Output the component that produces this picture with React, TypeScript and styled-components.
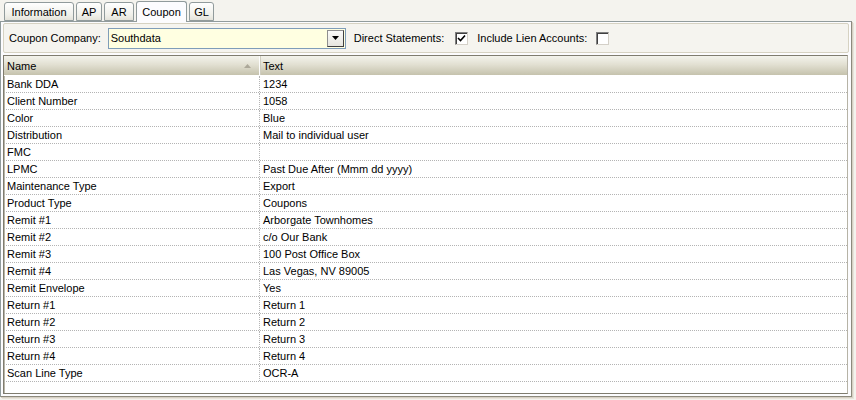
import * as React from "react";
import styled, { createGlobalStyle } from "styled-components";

const rows: [string, string][] = [
    ["Bank DDA", "1234"],
    ["Client Number", "1058"],
    ["Color", "Blue"],
    ["Distribution", "Mail to individual user"],
    ["FMC", ""],
    ["LPMC", "Past Due After (Mmm dd yyyy)"],
    ["Maintenance Type", "Export"],
    ["Product Type", "Coupons"],
    ["Remit #1", "Arborgate Townhomes"],
    ["Remit #2", "c/o Our Bank"],
    ["Remit #3", "100 Post Office Box"],
    ["Remit #4", "Las Vegas, NV 89005"],
    ["Remit Envelope", "Yes"],
    ["Return #1", "Return 1"],
    ["Return #2", "Return 2"],
    ["Return #3", "Return 3"],
    ["Return #4", "Return 4"],
    ["Scan Line Type", "OCR-A"],
];

const tabs: [string, number][] = [
    ["Information", 70],
    ["AP", 26],
    ["AR", 30],
    ["Coupon", 51],
    ["GL", 25],
];

const GlobalStyle = createGlobalStyle`
    html, body {
        margin: 0;
        padding: 0;
        background: #f4f3ee;
    }
    body {
        font-family: "Liberation Sans", Arial, sans-serif;
        font-size: 11px;
        color: #000;
    }
`;

const Window = styled("div")`
    width: 856px;
    height: 400px;
    box-sizing: border-box;
    display: flex;
    flex-direction: column;
    background: #f4f3ee;
    overflow: hidden;
`;

const TabStrip = styled("div")`
    display: flex;
    align-items: flex-end;
    gap: 2px;
    height: 21px;
    padding-left: 4px;
    position: relative;
    z-index: 1;
`;

const Tab = styled("div")<{ $active?: boolean; $width: number }>`
    box-sizing: border-box;
    width: ${(p) => p.$width}px;
    height: ${(p) => (p.$active ? "21px" : "19px")};
    margin-bottom: ${(p) => (p.$active ? "-1px" : "0")};
    display: flex;
    align-items: center;
    justify-content: center;
    border: 1px solid #919b9c;
    border-bottom: ${(p) => (p.$active ? "none" : "1px solid #919b9c")};
    border-radius: 3px 3px 0 0;
    background: ${(p) =>
        p.$active
            ? "#fcfcfe"
            : "linear-gradient(#ffffff, #f0f0ea 70%, #e4e3da)"};
    color: #000;
    white-space: nowrap;
`;

const Panel = styled("div")`
    flex: 1;
    margin: 0 4px 3px 0;
    box-sizing: border-box;
    border: 1px solid #919b9c;
    border-right-color: #8d8a7d;
    border-bottom-color: #8d8a7d;
    box-shadow: 1px 1px 0 #d6d0c4, 2px 2px 0 #e7e3da;
    background: #fcfcfe;
    padding: 1px 2px 2px 2px;
    display: flex;
    flex-direction: column;
    gap: 2px;
`;

const Toolbar = styled("div")`
    height: 30px;
    box-sizing: border-box;
    display: flex;
    align-items: center;
    padding: 0 5px;
    border: 1px solid #d6d2c2;
    border-radius: 2px;
    background: #f5f4ef;
`;

const Label = styled("span")<{ $gap?: number }>`
    margin-right: ${(p) => p.$gap ?? 10}px;
    white-space: nowrap;
`;

const Combo = styled("div")`
    width: 238px;
    height: 21px;
    box-sizing: border-box;
    display: flex;
    border: 1px solid #7f9db9;
    background: #ffffe1;
    margin-right: 8px;
`;

const ComboText = styled("div")`
    flex: 1;
    display: flex;
    align-items: center;
    padding-left: 2px;
`;

const ComboButton = styled("div")`
    width: 17px;
    margin: 1px;
    box-sizing: border-box;
    display: flex;
    align-items: center;
    justify-content: center;
    border: 1px solid #8f8f8f;
    border-right-color: #404040;
    border-bottom-color: #404040;
    background: linear-gradient(#fbfbf9, #e6e5df);
`;

const Check = styled("div")`
    width: 13px;
    height: 13px;
    box-sizing: border-box;
    border: 1px solid;
    border-color: #808080 #d4d0c8 #d4d0c8 #808080;
    box-shadow: inset 1px 1px 0 #404040;
    background: #fff;
    display: flex;
    align-items: center;
    justify-content: center;
    margin-right: 9px;
`;

const Grid = styled("div")`
    flex: 1;
    box-sizing: border-box;
    border: 1px solid #7f7c6f;
    border-right-color: #b6b3a6;
    box-shadow: inset 1px 1px 0 #b9b6a8;
    margin-right: 1px;
    background: #fff;
    display: flex;
    flex-direction: column;
    overflow: hidden;
`;

const HeaderRow = styled("div")`
    display: grid;
    grid-template-columns: 256px 1fr;
    height: 19px;
    background: linear-gradient(#f3f3ec, #e2e0d2 45%, #c5c2ad);
    border-bottom: 1px solid #ffffff;
`;

const HeaderCell = styled("div")<{ $divider?: boolean }>`
    display: flex;
    align-items: center;
    justify-content: space-between;
    padding: 0 8px 0 3px;
    border-right: ${(p) => (p.$divider ? "1px solid #fdfdfd" : "none")};
    box-shadow: ${(p) => (p.$divider ? "1px 0 0 #cfcdc0" : "none")};
`;

const Row = styled("div")`
    display: grid;
    grid-template-columns: 256px 1fr;
    height: 17px;
    border-bottom: 1px dotted #b4b4b4;
    box-sizing: border-box;
`;

const Cell = styled("div")<{ $divider?: boolean }>`
    display: flex;
    align-items: center;
    padding-left: 3px;
    border-right: ${(p) => (p.$divider ? "1px dotted #b4b4b4" : "none")};
    white-space: nowrap;
    overflow: hidden;
`;

const SortArrow = () => (
    <svg width="7" height="4" viewBox="0 0 7 4">
        <path d="M0 4 L3.5 0 L7 4 Z" fill="#aca899" />
    </svg>
);

const DownArrow = () => (
    <svg width="7" height="4" viewBox="0 0 7 4">
        <path d="M0 0 L7 0 L3.5 4 Z" fill="#000" />
    </svg>
);

const Tick = () => (
    <svg width="9" height="9" viewBox="0 0 9 9">
        <path d="M1 4 L3.5 6.5 L8 1.5" stroke="#000" strokeWidth="1.6" fill="none" />
    </svg>
);

export default function App() {
    return (
        <Window>
            <GlobalStyle />
            <TabStrip>
                {tabs.map(([t, w]) => (
                    <Tab key={t} $width={w} $active={t === "Coupon"}>
                        {t}
                    </Tab>
                ))}
            </TabStrip>
            <Panel>
                <Toolbar>
                    <Label $gap={7}>Coupon Company:</Label>
                    <Combo>
                        <ComboText>Southdata</ComboText>
                        <ComboButton>
                            <DownArrow />
                        </ComboButton>
                    </Combo>
                    <Label $gap={11}>Direct Statements:</Label>
                    <Check>
                        <Tick />
                    </Check>
                    <Label $gap={9}>Include Lien Accounts:</Label>
                    <Check />
                </Toolbar>
                <Grid>
                    <HeaderRow>
                        <HeaderCell $divider>
                            <span>Name</span>
                            <SortArrow />
                        </HeaderCell>
                        <HeaderCell>
                            <span>Text</span>
                        </HeaderCell>
                    </HeaderRow>
                    {rows.map(([name, text]) => (
                        <Row key={name}>
                            <Cell $divider>{name}</Cell>
                            <Cell>{text}</Cell>
                        </Row>
                    ))}
                </Grid>
            </Panel>
        </Window>
    );
}
